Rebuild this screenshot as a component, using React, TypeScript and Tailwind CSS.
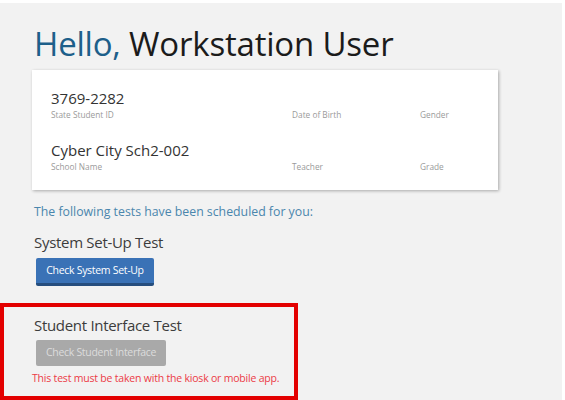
import React from "react";

const font = { fontFamily: '"Open Sans", "Noto Sans", sans-serif' };

function Field({ value, label }: { value?: string; label: string }) {
  return (
    <div className="flex flex-col">
      <div className="h-[23px] text-[15px] leading-[22px] text-[#333]">{value ?? ""}</div>
      <div className="text-[8.3px] leading-[10px] text-[#9a9a9a]">{label}</div>
    </div>
  );
}

export default function App() {
  return (
    <div
      className="w-[565px] h-[400px] overflow-hidden bg-[#f2f2f2] border-t-[3px] border-r-[3px] border-white"
      style={font}
    >
      <div className="pl-[34px] pt-[23px]">
        <h1 className="text-[33px] leading-[36px] tracking-[-0.2px] text-[#1b1b1b]">
          <span className="text-[#1d5f8a]">Hello,</span> Workstation User
        </h1>
      </div>
      <div className="ml-[32px] mt-[8px] w-[466px] h-[120px] bg-white shadow-[1px_1px_3px_rgba(0,0,0,0.3)] pl-[19px] pt-[17px] flex flex-col gap-[19px]">
        <div className="grid grid-cols-[241px_128px_1fr]">
          <Field value="3769-2282" label="State Student ID" />
          <Field label="Date of Birth" />
          <Field label="Gender" />
        </div>
        <div className="grid grid-cols-[241px_128px_1fr]">
          <Field value="Cyber City Sch2-002" label="School Name" />
          <Field label="Teacher" />
          <Field label="Grade" />
        </div>
      </div>
      <div className="pl-[34px] pt-[12px]">
        <p className="text-[12.3px] leading-[20px] text-[#4a86ad]">
          The following tests have been scheduled for you:
        </p>
        <p className="mt-[9px] text-[15px] leading-[22px] tracking-[-0.3px] text-[#3c3c3c]">System Set-Up Test</p>
        <button className="mt-[5px] ml-[2px] h-[28px] w-[118px] bg-[#3a72b6] border-b-[3px] border-[#264e7e] rounded-[2px] text-[10.5px] text-white tracking-[-0.3px]">
          Check System Set-Up
        </button>
      </div>
      <div className="mt-[17px] w-[298px] h-[97px] border-[4px] border-[#e30000] pl-[30px] pt-[7px]">
        <p className="text-[15px] leading-[22px] tracking-[-0.3px] text-[#3c3c3c]">Student Interface Test</p>
        <button className="mt-[4px] ml-[2px] h-[26px] w-[130px] bg-[#a9a9a9] rounded-[2px] text-[10.5px] text-[#dcdcdc] tracking-[-0.3px]">
          Check Student Interface
        </button>
        <p className="mt-[5px] -ml-[2px] text-[10.5px] leading-[14px] text-[#ec3b46] tracking-[-0.2px]">
          This test must be taken with the kiosk or mobile app.
        </p>
      </div>
    </div>
  );
}
